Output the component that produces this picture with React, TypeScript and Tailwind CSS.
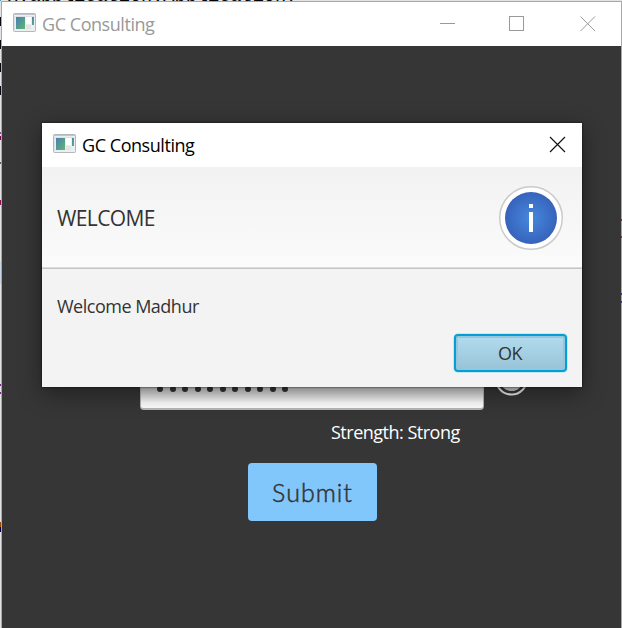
const ui = "font-['Open_Sans','Noto_Sans',sans-serif]";

function AppIcon() {
  return (
    <svg width="23" height="19" viewBox="0 0 23 19" className="block shrink-0">
      <defs>
        <linearGradient id="pane" x1="0" y1="0" x2="1" y2="1">
          <stop offset="0" stopColor="#4a7fb0" />
          <stop offset="1" stopColor="#5fb574" />
        </linearGradient>
      </defs>
      <rect x="0.5" y="0.5" width="22" height="18" rx="0.8" fill="#eceef0" stroke="#b4b9c0" />
      <path d="M1 1.5H22" stroke="#c1c5ca" />
      <path d="M1.5 17V3.5H21.5" fill="none" stroke="#dce0e5" />
      <rect x="3" y="4" width="9" height="12" fill="url(#pane)" />
      <rect x="13" y="4" width="5" height="7" fill="#fff" />
      <rect x="13" y="12" width="5" height="4" fill="#e2e4e6" />
      <rect x="19" y="4" width="2" height="8" fill="url(#pane)" />
    </svg>
  );
}

function Submerged({ top, height, color }: { top: number; height: number; color: string }) {
  return <span className="absolute left-0 w-px" style={{ top, height, backgroundColor: color }} />;
}

const leftMarks: [number, number, string][] = [
  [17, 9, '#080812'], [40, 9, '#080812'], [63, 9, '#080812'], [86, 9, '#080812'],
  [132, 2, '#98458b'], [136, 4, '#7f0055'], [162, 2, '#555b65'], [200, 5, '#8a1050'],
  [261, 23, '#c8d5e4'], [384, 2, '#7d238e'], [392, 2, '#7d238e'], [522, 5, '#984c00'], [527, 5, '#00004a'],
];

const rightMarks: [number, string][] = [[217, '#6b4435'], [234, '#6b4435'], [291, '#4a3a90'], [299, '#4a3a90']];

export default function App() {
  return (
    <div className={`relative h-[628px] w-[622px] overflow-hidden bg-[#e2e3e2] ${ui}`}>
      <div className="absolute left-[-4px] top-[-12px] whitespace-pre font-['Liberation_Mono',monospace] text-[18.6px] leading-[18px] text-black">rx.application.Application;</div>
      {leftMarks.map(([top, height, color]) => (
        <Submerged key={top} top={top} height={height} color={color} />
      ))}

      <main className="relative ml-px mt-px flex h-[627px] w-[621px] flex-col border-l border-r border-t border-[#a8a8a8] bg-[#363636]">
        <header className="flex h-[44px] shrink-0 items-start bg-white pl-[11px]">
          <div className="mt-[11px]"><AppIcon /></div>
          <span className="ml-[6px] mt-[10px] whitespace-nowrap text-[18px] leading-[25px] tracking-[-0.45px] text-[#999]">GC Consulting</span>
          <svg className="ml-auto mr-[25px] mt-[13px]" width="156" height="17" fill="none" stroke="#999" shapeRendering="crispEdges">
            <path d="M0 8.5H15" />
            <rect x="69.5" y="1.5" width="14" height="14" />
            <path d="M140.5 1.5L155 16M155 1.5L140.5 16" shapeRendering="auto" />
          </svg>
        </header>
        <div className="flex h-[582px] flex-col pt-[324px]">
          <div className="ml-[138px] flex h-[40px]">
            <div className="flex h-[40px] w-[344px] items-start gap-[6.5px] rounded-[4px] border border-b-2 border-[#b6b6b6] bg-linear-to-b from-[#bdbdbd] from-35% to-white to-85% pl-[16px] pt-[15px]">
              {Array.from({ length: 11 }, (_, i) => <i key={i} className="size-[6px] shrink-0 rounded-full bg-[#333]" />)}
            </div>
            <svg className="ml-[10px] mt-[-8px]" width="34" height="34">
              <circle cx="17.5" cy="17" r="15.5" fill="none" stroke="#eee" strokeWidth="2" />
              <circle cx="17.5" cy="17.5" r="11.5" fill="#ccc" />
            </svg>
          </div>
          <div className="ml-[329px] mt-[9px] whitespace-nowrap text-[18px] leading-[26px] tracking-[-0.5px] text-white">Strength: Strong</div>
          <button className="ml-[246px] mt-[18px] h-[58px] w-[129px] rounded-[4px] bg-[#82c7fc] font-['Lato'] text-[25px] font-light leading-[58px] tracking-[1px] text-[#333] [-webkit-text-stroke:0.5px_#333]">Submit</button>
        </div>
        {rightMarks.map(([top, color]) => (
          <span key={top} className="absolute right-[-1px] h-[2px] w-px" style={{ top, backgroundColor: color }} />
        ))}
      </main>

      <section className="absolute left-[42px] top-[123px] flex h-[264px] w-[540px] flex-col bg-[#f3f3f3] shadow-[0_6px_22px_rgba(0,0,0,0.42),0_0_2px_rgba(0,0,0,0.8)]">
        <div className="flex h-[44px] shrink-0 bg-white pl-[11px]">
          <div className="mt-[11px]"><AppIcon /></div>
          <span className="ml-[6px] mt-[10px] whitespace-nowrap text-[18px] leading-[25px] tracking-[-0.45px] text-black">GC Consulting</span>
          <svg className="ml-auto mr-[16px] mt-[13px]" width="17" height="17" fill="none" stroke="#111" strokeWidth="1.15">
            <path d="M1 1L16 16M16 1L1 16" />
          </svg>
        </div>
        <div className="flex h-[102px] shrink-0 items-center justify-between border-b border-[#c4c4c4] bg-linear-to-b from-[#f2f2f2] to-[#fbfbfb] pl-[15px] pr-[18px] shadow-[inset_0_-1px_0_#dcdcdc]">
          <span className="text-[21px] leading-[28px] tracking-[-0.6px] text-[#333]">WELCOME</span>
          <svg width="66" height="66" className="mt-[1px]">
            <defs><radialGradient id="info"><stop offset="0" stopColor="#4689dc" /><stop offset="1" stopColor="#3763bc" /></radialGradient></defs>
            <circle cx="33" cy="33" r="31.3" fill="#fff" stroke="#cbcbcb" strokeWidth="1.5" />
            <circle cx="33" cy="33" r="26" fill="url(#info)" />
            <rect x="31" y="19" width="4" height="4" fill="#fff" />
            <rect x="31" y="27" width="4" height="20" fill="#fff" />
          </svg>
        </div>
        <div className="ml-[15px] mt-[24px] text-[18px] leading-[26px] tracking-[-0.5px] text-[#333]">Welcome Madhur</div>
        <button className="ml-[412px] mt-[15px] flex h-[38px] w-[113px] shrink-0 items-center justify-center rounded-[4px] border-2 border-[#039ed3] bg-linear-to-b from-[#b2dcee] to-[#98c2d6] pr-px text-[18px] leading-[34px] tracking-[-0.4px] text-[#333] shadow-[0_0_0_1px_#c5e7f0,inset_0_0_0_2px_#94c7dd]">OK</button>
      </section>
    </div>
  );
}
